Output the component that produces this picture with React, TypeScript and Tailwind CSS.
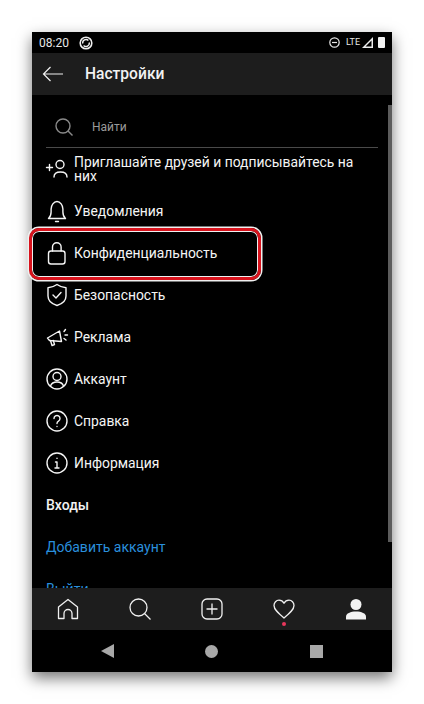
import { ReactNode } from "react";

function Stroke({ size = 24, sw = 1.4, children }: { size?: number; sw?: number; children: ReactNode }) {
    return (
        <svg width={size} height={size} viewBox="0 0 24 24" fill="none" stroke="#f5f5f5" strokeWidth={sw} strokeLinecap="round" strokeLinejoin="round">
            {children}
        </svg>
    );
}

const InviteIcon = () => (
    <Stroke>
        <path d="M1.500 10.500h6M4.500 7.500v6" />
        <circle cx="15" cy="7.500" r="4" />
        <path d="M9 20c0-3 2.500-5 6.500-5s6.500 2 6.500 5" />
    </Stroke>
);
const BellIcon = () => (
    <Stroke>
        <path d="M3.500 19.500c1.800-1.600 2.600-3 2.600-6.500V10c0-3.600 2.700-7.500 5.900-7.500s5.900 3.900 5.900 7.500v3c0 3.500.8 4.900 2.600 6.500z" />
        <path d="M10.500 22.500h3" />
    </Stroke>
);
const LockIcon = () => (
    <Stroke>
        <rect x="3.500" y="10" width="16.500" height="13" rx="2.500" />
        <path d="M7.500 10V6a4.300 4.300 0 0 1 8.600 0v4" />
    </Stroke>
);
const ShieldIcon = () => (
    <Stroke>
        <path d="M12 1.500c2.800 2 5.500 3 9 3.200v8.300c0 4.800-4 8-9 9.500-5-1.500-9-4.700-9-9.500V4.700c3.500-.2 6.200-1.200 9-3.200z" />
        <path d="M8 12l3 3 5-5.500" />
    </Stroke>
);
const MegaphoneIcon = () => (
    <Stroke>
        <path d="M2.500 13l12-7 2 10.500-12-1z" />
        <path d="M5.500 15.500l1.500 5 2.500-1-1.200-4" />
        <path d="M19 6.500l1.500-2M20 10h2.500M19 13.500l2 1.500" />
    </Stroke>
);
const AccountIcon = () => (
    <Stroke>
        <circle cx="12" cy="12" r="10" />
        <circle cx="12" cy="9.500" r="4" />
        <path d="M5.500 19c.8-2.500 3.500-4 6.500-4s5.700 1.500 6.500 4" />
    </Stroke>
);
const HelpIcon = () => (
    <Stroke>
        <circle cx="12" cy="12" r="10" />
        <path d="M9 9.500a3 3 0 1 1 4.500 2.600c-1 .6-1.500 1.200-1.500 2.400" />
        <path d="M12 17.500v.1" />
    </Stroke>
);
const InfoIcon = () => (
    <Stroke>
        <circle cx="12" cy="12" r="10" />
        <path d="M10.500 11H12v6M10 17h4" />
        <path d="M12 7.300v.1" />
    </Stroke>
);

function Row({ icon, label }: { icon: ReactNode; label: string }) {
    return (
        <div className="h-[42px] flex items-center pl-[13px]">
            <span className="w-[24px] flex justify-center">{icon}</span>
            <span className="ml-[5px] w-[290px] text-[13.9px] leading-[14px] text-[#f5f5f5]">{label}</span>
        </div>
    );
}

export default function App() {
    return (
        <div className="w-[424px] h-[704px] bg-white pt-[32px] pl-[32px] overflow-hidden" style={{ fontFamily: "Roboto, sans-serif" }}>
            <div className="relative w-[360px] h-[640px] bg-black flex flex-col shadow-[0_6px_14px_rgba(0,0,0,0.55)]">
                {/* status bar */}
                <div className="h-[21px] flex items-center justify-between pl-[7px] pr-[7px] shrink-0">
                    <div className="flex items-center gap-[10px]">
                        <span className="text-[12px] leading-none text-[#e8e8e8]">08:20</span>
                        <svg width="14" height="14" viewBox="0 0 14 14" fill="none" stroke="#eee">
                            <circle cx="7" cy="7" r="5.800" strokeWidth="1.600" />
                            <path d="M3.800 7.500a3.300 3.300 0 0 1 5.600-3M10.200 6.500a3.300 3.300 0 0 1-5.600 3" strokeWidth="1.400" />
                        </svg>
                    </div>
                    <div className="flex items-center">
                        <svg width="11" height="11" viewBox="0 0 11 11" fill="none" stroke="#e8e8e8" strokeWidth="1.200">
                            <circle cx="5.500" cy="5.500" r="4.700" />
                            <path d="M3 5.500h5" />
                        </svg>
                        <span className="ml-[6px] text-[9px] leading-none text-[#e8e8e8]">LTE</span>
                        <svg width="11" height="11" viewBox="0 0 11 11" className="ml-[2px]">
                            <path d="M0 11L11 0v11z" fill="#eee" />
                            <path d="M3.500 9.500L9.500 3.500v6z" fill="#000" />
                        </svg>
                        <div className="ml-[5px] w-[7px] h-[11px] bg-[#f2f2f2] rounded-[1px]" />
                    </div>
                </div>

                {/* header */}
                <div className="h-[42px] bg-[#1d1d1d] flex items-center shrink-0">
                    <svg width="22" height="16" viewBox="0 0 22 16" fill="none" stroke="#f0f0f0" strokeWidth="1.200" className="ml-[10px]">
                        <path d="M21 8H1.500M8.500 1L1.500 8l7 7" />
                    </svg>
                    <span className="ml-[21px] mt-[2px] text-[15.6px] font-medium leading-none text-[#f2f2f2]">Настройки</span>
                </div>

                {/* settings list */}
                <div className="flex-1 min-h-0 overflow-hidden">
                    <div className="mt-[11px] mx-[14px] h-[42px] flex items-center border-b border-[#4a4a4a]">
                        <svg width="20" height="20" viewBox="0 0 20 20" fill="none" stroke="#8a8a8a" strokeWidth="1.400" className="ml-[8px]">
                            <circle cx="9" cy="9" r="7" />
                            <path d="M14 14l4.500 4.500" />
                        </svg>
                        <span className="ml-[18px] text-[12px] leading-none text-[#9a9a9a]">Найти</span>
                    </div>
                    <Row icon={<InviteIcon />} label="Приглашайте друзей и подписывайтесь на них" />
                    <Row icon={<BellIcon />} label="Уведомления" />
                    <Row icon={<LockIcon />} label="Конфиденциальность" />
                    <Row icon={<ShieldIcon />} label="Безопасность" />
                    <Row icon={<MegaphoneIcon />} label="Реклама" />
                    <Row icon={<AccountIcon />} label="Аккаунт" />
                    <Row icon={<HelpIcon />} label="Справка" />
                    <Row icon={<InfoIcon />} label="Информация" />
                    <div className="h-[42px] flex items-center pl-[14px] text-[14px] font-medium text-[#f2f2f2]">Входы</div>
                    <div className="h-[42px] flex items-center pl-[14px] text-[14px] text-[#2a8fdc]">Добавить аккаунт</div>
                    <div className="h-[42px] flex items-center pl-[14px] text-[14px] text-[#2a8fdc]">Выйти</div>
                </div>

                {/* bottom nav */}
                <div className="h-[42px] bg-[#1d1d1d] flex items-center shrink-0 z-10">
                    <span className="w-[72px] flex justify-center">
                        <svg width="22" height="22" viewBox="0 0 22 22" fill="none" stroke="#f0f0f0" strokeWidth="1.300" strokeLinejoin="round">
                            <path d="M1.500 20.500V9L11 1.500 20.500 9v11.500h-5.500v-5a4 4 0 0 0-8 0v5z" />
                        </svg>
                    </span>
                    <span className="w-[72px] flex justify-center">
                        <svg width="22" height="22" viewBox="0 0 22 22" fill="none" stroke="#f0f0f0" strokeWidth="1.300">
                            <circle cx="9.500" cy="9.500" r="8.500" />
                            <path d="M15.500 15.500l6 6" />
                        </svg>
                    </span>
                    <span className="w-[72px] flex justify-center">
                        <svg width="22" height="22" viewBox="0 0 22 22" fill="none" stroke="#f0f0f0" strokeWidth="1.300">
                            <rect x="1" y="1" width="20" height="20" rx="5" />
                            <path d="M11 5.500v11M5.500 11h11" />
                        </svg>
                    </span>
                    <span className="relative w-[72px] flex justify-center">
                        <svg width="22" height="20" viewBox="0 0 22 20" fill="none" stroke="#f0f0f0" strokeWidth="1.300" strokeLinejoin="round">
                            <path d="M11 19C5 14 1 10.500 1 6.500 1 3.500 3.300 1.200 6 1.200c2.100 0 3.900 1 5 3 1.100-2 2.900-3 5-3 2.700 0 5 2.300 5 5.300 0 4-4 7.500-10 12.500z" />
                        </svg>
                        <span className="absolute left-[34px] top-[23px] w-[4px] h-[4px] rounded-full bg-[#e8375c]" />
                    </span>
                    <span className="w-[72px] flex justify-center">
                        <svg width="20" height="21" viewBox="0 0 20 21">
                            <circle cx="10" cy="5.500" r="5.500" fill="#f2f2f2" />
                            <path d="M0 20.500v-3c0-3 4.500-5 10-5s10 2 10 5v3z" fill="#f2f2f2" />
                        </svg>
                    </span>
                </div>

                {/* android nav */}
                <div className="h-[42px] flex items-center shrink-0 gap-[91px] pl-[69px]">
                    <svg width="13" height="14" viewBox="0 0 13 14">
                        <path d="M13 0v14L0 7z" fill="#a8a8a8" />
                    </svg>
                    <div className="w-[13px] h-[13px] rounded-full bg-[#a8a8a8]" />
                    <div className="w-[13px] h-[13px] bg-[#a8a8a8] ml-[1px]" />
                </div>

                {/* scrollbar */}
                <div className="absolute right-0 top-[73px] w-[4px] h-[437px] bg-[#5c5c5c]" />

                {/* red highlight */}
                <div className="absolute left-[-3px] top-[196px] w-[232px] h-[52px] rounded-[10px] border-[3px] border-[#d8121c] shadow-[0_0_0_1.5px_#f0f0f0,inset_0_0_0_1px_#f0f0f0]" />
            </div>
        </div>
    );
}
